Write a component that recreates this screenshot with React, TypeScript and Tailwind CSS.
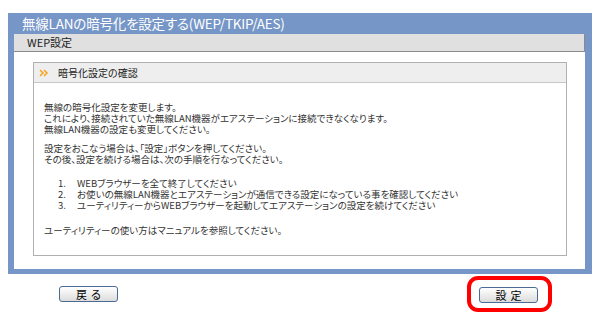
import React from "react";

const jp = { fontFamily: '"Noto Sans CJK JP", "Noto Sans", sans-serif', fontFeatureSettings: '"palt"' } as React.CSSProperties;

function Arrow() {
  return (
    <svg width="10" height="8" viewBox="0 0 10 8" className="shrink-0">
      <path d="M1 1 L4 4 L1 7" fill="none" stroke="#f5a623" strokeWidth="1.6" />
      <path d="M5 1 L8 4 L5 7" fill="none" stroke="#f5a623" strokeWidth="1.6" />
    </svg>
  );
}

function Btn({ label }: { label: string }) {
  return (
    <div className="w-[59px] h-[16px] rounded-[3px] border border-[#4d6a94] bg-gradient-to-b from-white to-[#dcdcdc] flex items-center justify-center text-[11px] leading-none text-black tracking-[4px] pl-[4px]">
      {label}
    </div>
  );
}

export default function App() {
  return (
    <div className="w-[600px] h-[317px] bg-white overflow-hidden text-[#222]" style={jp}>
      <div className="ml-[8px] mt-[13px] w-[584px] h-[261px] bg-[#7596c6] flex flex-col pb-[5px]">
        <div className="h-[21px] pl-[14px] flex items-center text-white text-[13.5px] leading-none tracking-[-0.2px]">
          無線LANの暗号化を設定する(WEP/TKIP/AES)
        </div>
        <div className="ml-[6px] mr-[7px] flex-1 flex flex-col bg-white">
          <div className="h-[18px] bg-[#e0e0e0] border-b border-r border-[#8a8a8a] pl-[13px] flex items-center text-[11px] leading-none text-[#222]">
            WEP設定
          </div>
          <div className="flex-1 pt-[10px] pl-[19px] pr-[18px] pb-[13px] flex">
            <div className="flex-1 border border-[#b0b0b0] flex flex-col">
              <div className="h-[20px] bg-[#eeeeee] border-b border-[#c8c8c8] flex items-center pl-[5px] gap-[9px] text-[10px] leading-none">
                <Arrow />
                <span>暗号化設定の確認</span>
              </div>
              <div className="pl-[10px] pt-[19px] text-[9.5px] leading-[11px] text-[#333]">
                <p>無線の暗号化設定を変更します。</p>
                <p>これにより、接続されていた無線LAN機器がエアステーションに接続できなくなります。</p>
                <p>無線LAN機器の設定も変更してください。</p>
                <p className="mt-[8px]">設定をおこなう場合は、「設定」ボタンを押してください。</p>
                <p>その後、設定を続ける場合は、次の手順を行なってください。</p>
                <ol className="mt-[13px] pl-[14px]">
                  <li className="flex"><span className="w-[19px]">1.</span><span>WEBブラウザーを全て終了してください</span></li>
                  <li className="flex"><span className="w-[19px]">2.</span><span>お使いの無線LAN機器とエアステーションが通信できる設定になっている事を確認してください</span></li>
                  <li className="flex"><span className="w-[19px]">3.</span><span>ユーティリティーからWEBブラウザーを起動してエアステーションの設定を続けてください</span></li>
                </ol>
                <p className="mt-[14px]">ユーティリティーの使い方はマニュアルを参照してください。</p>
              </div>
            </div>
          </div>
        </div>
      </div>
      <div className="flex items-start">
        <div className="ml-[59px] mt-[12px]">
          <Btn label="戻る" />
        </div>
        <div className="flex-1" />
        <div className="mt-[2px] mr-[48px] w-[85px] h-[36px] border-4 border-[#ff0000] rounded-[11px] pl-[8px] pt-[7px]">
          <Btn label="設定" />
        </div>
      </div>
    </div>
  );
}
